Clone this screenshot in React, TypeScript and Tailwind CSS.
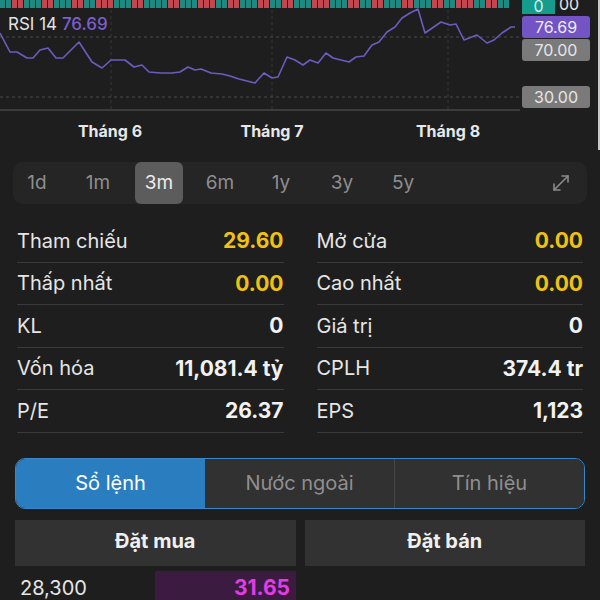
import React from 'react';
import { MoveDiagonal } from 'lucide-react';

const rsiPoints: [number, number][] = [
  [0, 33], [10, 52], [17, 52], [27, 58], [33, 58], [40, 50], [48, 48], [56, 58], [63, 58],
  [79, 42], [92, 62], [102, 68], [111, 60], [125, 60], [134, 67], [142, 65], [149, 72],
  [161, 73], [172, 73], [180, 72], [188, 67], [195, 70], [201, 69], [211, 73], [222, 74],
  [230, 76], [239, 79], [247, 81], [255, 83], [264, 73], [272, 78], [278, 77], [287, 57],
  [295, 60], [303, 65], [310, 60], [318, 63], [326, 53], [333, 58], [341, 60], [349, 62],
  [356, 57], [364, 56], [372, 45], [379, 42], [387, 32], [395, 27], [402, 18], [410, 13],
  [418, 9], [425, 33], [441, 22], [450, 25], [456, 24], [464, 40], [477, 35], [487, 43],
  [494, 40], [502, 33], [511, 27], [515, 27],
];

// g = tăng, r = giảm
const volPattern = 'ggrrgggrrgggrrggrrrgggrrggggrrgggrrrggrrgggrrggrrgggrrrgggrrggrrgggrrgggrrggrrrggrrgg';

const stats: [string, string, boolean, string, string, boolean][] = [
  ['Tham chiếu', '29.60', true, 'Mở cửa', '0.00', true],
  ['Thấp nhất', '0.00', true, 'Cao nhất', '0.00', true],
  ['KL', '0', false, 'Giá trị', '0', false],
  ['Vốn hóa', '11,081.4 tỷ', false, 'CPLH', '374.4 tr', false],
  ['P/E', '26.37', false, 'EPS', '1,123', false],
];

const ranges = ['1d', '1m', '3m', '6m', '1y', '3y', '5y'];

const StatCell = ({ label, value, yellow }: { label: string; value: string; yellow: boolean }) => (
  <div className="flex h-[42.5px] items-center justify-between border-b border-[#3a3a3a]">
    <span className="text-[20px] text-[#e6e6e6]">{label}</span>
    <span className={`text-[21px] font-bold ${yellow ? 'text-[#f0c20e]' : 'text-[#f2f2f2]'}`}>{value}</span>
  </div>
);

export default function App() {
  return (
    <div className="min-h-[600px] w-[600px] overflow-hidden bg-[#1e1e1e] font-['Inter',sans-serif]">
      {/* biểu đồ RSI */}
      <div className="h-[150px] border-r-2 border-[#c8c8c8]">
        <div className="flex h-[111px]">
          <div className="relative w-[520px]">
            <svg width="520" height="111" className="block">
              {volPattern.split('').map((c, i) => (
                <rect key={i} x={i * 6} y={0} width={5} height={8} fill={c === 'g' ? '#1c8a80' : '#c4474f'} />
              ))}
              {[111, 272, 448].map((x) => (
                <line key={x} x1={x} y1={10} x2={x} y2={109} stroke="#363636" strokeDasharray="3 3" />
              ))}
              <line x1={0} y1={37} x2={520} y2={37} stroke="#4a4a4a" strokeDasharray="3 3" />
              <line x1={0} y1={97} x2={520} y2={97} stroke="#4a4a4a" strokeDasharray="3 3" />
              <line x1={0} y1={110} x2={520} y2={110} stroke="#3c3c3c" strokeWidth={2} />
              <polyline
                points={rsiPoints.map((p) => p.join(',')).join(' ')}
                fill="none"
                stroke="#6f5bc0"
                strokeWidth={1.6}
                strokeLinejoin="round"
              />
            </svg>
            <div className="absolute left-[8px] top-[14px] text-[17px] leading-[20px] text-[#e4e4e4]">
              RSI 14 <span className="font-medium text-[#7c5fcb]">76.69</span>
            </div>
          </div>
          <div className="flex w-[78px] flex-col pl-[2px] text-[16px] leading-none">
            <div className="flex h-[14px] overflow-hidden">
              <div className="flex w-[33px] justify-center overflow-hidden bg-[#159c8c] text-[#d8f5ef]">
                <span className="-mt-[2px]">0</span>
              </div>
              <span className="-mt-[4px] ml-[4px] text-[#e8e8e8]">00</span>
            </div>
            <div className="mt-[2px] flex h-[22px] w-[68px] items-center justify-center rounded-[3px] bg-[#7254c4] text-[#f0ecff]">
              76.69
            </div>
            <div className="mt-[1px] flex h-[22px] w-[68px] items-center justify-center rounded-[3px] bg-[#7a7a7a] text-[#e6e6e6]">
              70.00
            </div>
            <div className="mt-[25px] flex h-[22px] w-[68px] items-center justify-center rounded-[3px] bg-[#7a7a7a] text-[#e6e6e6]">
              30.00
            </div>
          </div>
        </div>
        <div className="flex h-[39px] items-center text-[16px] font-bold text-[#e8e8e8]">
          <div className="ml-[60px] w-[100px] text-center">Tháng 6</div>
          <div className="ml-[62px] w-[100px] text-center">Tháng 7</div>
          <div className="ml-[76px] w-[100px] text-center">Tháng 8</div>
        </div>
      </div>

      {/* khoảng thời gian */}
      <div className="mx-[13px] mt-[12px] flex h-[42px] items-center rounded-[10px] bg-[#252525]">
        <div className="flex gap-[13px]">
          {ranges.map((r) => (
            <div
              key={r}
              className={`flex h-[42px] w-[48px] items-center justify-center rounded-[6px] text-[19px] ${
                r === '3m' ? 'bg-[#5c5c5c] text-[#ededed]' : 'text-[#8e8e8e]'
              }`}
            >
              {r}
            </div>
          ))}
        </div>
        <div className="ml-auto mr-[14px] text-[#8a8a8a]">
          <MoveDiagonal size={24} strokeWidth={1.6} />
        </div>
      </div>

      {/* thông số */}
      <div className="mt-[16px] grid grid-cols-2 gap-x-[33px] px-[17px]">
        {stats.map(([l1, v1, y1, l2, v2, y2]) => (
          <React.Fragment key={l1}>
            <StatCell label={l1} value={v1} yellow={y1} />
            <StatCell label={l2} value={v2} yellow={y2} />
          </React.Fragment>
        ))}
      </div>

      {/* tab */}
      <div className="mx-[15px] mt-[25px] flex h-[51px] overflow-hidden rounded-[10px] border-[1.5px] border-[#3a86c8] text-[20px]">
        <div className="flex flex-1 items-center justify-center bg-[#2a7ec0] text-white">Sổ lệnh</div>
        <div className="flex flex-1 items-center justify-center bg-[#313131] text-[#8f8f8f]">Nước ngoài</div>
        <div className="flex flex-1 items-center justify-center border-l border-[#474747] bg-[#313131] text-[#8f8f8f]">
          Tín hiệu
        </div>
      </div>

      {/* sổ lệnh */}
      <div className="mx-[15px] mt-[11px] grid grid-cols-2 gap-[9px]">
        <div className="flex h-[46px] items-center justify-center bg-[#323232] pb-[4px] text-[20px] font-bold text-[#f0f0f0]">Đặt mua</div>
        <div className="flex h-[46px] items-center justify-center bg-[#323232] pb-[4px] text-[20px] font-bold text-[#f0f0f0]">Đặt bán</div>
      </div>
      <div className="mt-[5px] flex h-[34px]">
        <div className="flex w-[155px] items-center pl-[20px] text-[20px] text-[#e6e6e6]">28,300</div>
        <div className="flex w-[141px] items-center justify-end bg-[#3b1b40] pr-[6px] text-[21px] font-bold text-[#e53be6]">
          31.65
        </div>
      </div>
    </div>
  );
}
